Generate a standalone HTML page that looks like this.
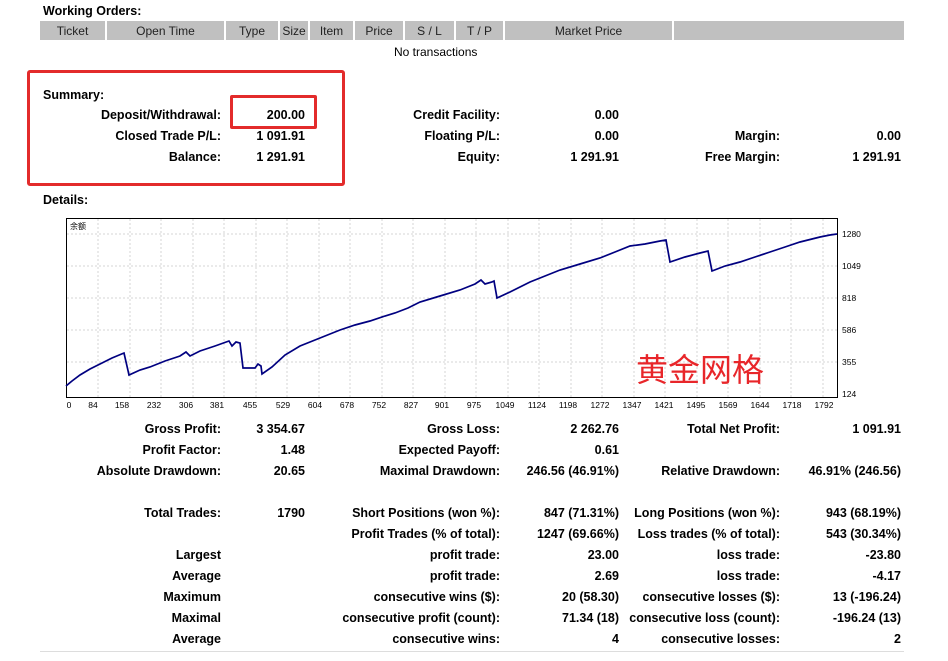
<!DOCTYPE html><html><head><meta charset="utf-8"><style>
body{margin:0;width:948px;height:661px;background:#fff;position:relative;overflow:hidden;font-family:"Liberation Sans",Tahoma,sans-serif;font-size:12.5px;color:#000}
.a{position:absolute;line-height:16px;white-space:nowrap}
.b{font-weight:bold}
.r{text-align:right}
.h{position:absolute;top:21px;height:19px;background:#c0c0c0;line-height:20px;text-align:center;font-size:12px;color:#222}
</style></head><body>
<div class="a b" style="left:43px;top:3px">Working Orders:</div>
<div class="h" style="left:40px;width:65px">Ticket</div>
<div class="h" style="left:107px;width:117px">Open Time</div>
<div class="h" style="left:226px;width:52px">Type</div>
<div class="h" style="left:280px;width:28px">Size</div>
<div class="h" style="left:310px;width:43px">Item</div>
<div class="h" style="left:355px;width:48px">Price</div>
<div class="h" style="left:405px;width:49px">S / L</div>
<div class="h" style="left:456px;width:47px">T / P</div>
<div class="h" style="left:505px;width:167px">Market Price</div>
<div class="h" style="left:674px;width:230px"></div>
<div class="a" style="left:394px;top:44px;font-size:12px">No transactions</div>

<div style="position:absolute;left:27px;top:70px;width:312px;height:110px;border:3px solid #e32b2b;border-radius:3px"></div>
<div style="position:absolute;left:230px;top:95px;width:81px;height:28px;border:3px solid #e32b2b;border-radius:2px"></div>

<div class="a b" style="left:43px;top:87px">Summary:</div>
<div class="a b r" style="right:727px;top:107px">Deposit/Withdrawal:</div>
<div class="a b r" style="right:643px;top:107px">200.00</div>
<div class="a b r" style="right:727px;top:128px">Closed Trade P/L:</div>
<div class="a b r" style="right:643px;top:128px">1 091.91</div>
<div class="a b r" style="right:727px;top:149px">Balance:</div>
<div class="a b r" style="right:643px;top:149px">1 291.91</div>
<div class="a b r" style="right:448px;top:107px">Credit Facility:</div>
<div class="a b r" style="right:329px;top:107px">0.00</div>
<div class="a b r" style="right:448px;top:128px">Floating P/L:</div>
<div class="a b r" style="right:329px;top:128px">0.00</div>
<div class="a b r" style="right:448px;top:149px">Equity:</div>
<div class="a b r" style="right:329px;top:149px">1 291.91</div>
<div class="a b r" style="right:168px;top:128px">Margin:</div>
<div class="a b r" style="right:47px;top:128px">0.00</div>
<div class="a b r" style="right:168px;top:149px">Free Margin:</div>
<div class="a b r" style="right:47px;top:149px">1 291.91</div>
<div class="a b" style="left:43px;top:192px">Details:</div>

<svg style="position:absolute;left:0;top:0" width="948" height="420" font-family="Liberation Sans,sans-serif" font-size="9">
<rect x="66.5" y="218.5" width="771" height="179" fill="#fff" stroke="#000"/>
<g stroke="#d4d4d4" stroke-dasharray="2,2">
<line x1="67" x2="837" y1="234" y2="234"/><line x1="67" x2="837" y1="266" y2="266"/><line x1="67" x2="837" y1="298" y2="298"/><line x1="67" x2="837" y1="330" y2="330"/><line x1="67" x2="837" y1="362" y2="362"/>
<line x1="98" x2="98" y1="219" y2="397"/><line x1="130" x2="130" y1="219" y2="397"/><line x1="161" x2="161" y1="219" y2="397"/><line x1="193" x2="193" y1="219" y2="397"/><line x1="224" x2="224" y1="219" y2="397"/><line x1="256" x2="256" y1="219" y2="397"/><line x1="287" x2="287" y1="219" y2="397"/><line x1="319" x2="319" y1="219" y2="397"/><line x1="350" x2="350" y1="219" y2="397"/><line x1="382" x2="382" y1="219" y2="397"/><line x1="413" x2="413" y1="219" y2="397"/><line x1="445" x2="445" y1="219" y2="397"/><line x1="476" x2="476" y1="219" y2="397"/><line x1="508" x2="508" y1="219" y2="397"/><line x1="539" x2="539" y1="219" y2="397"/><line x1="571" x2="571" y1="219" y2="397"/><line x1="602" x2="602" y1="219" y2="397"/><line x1="634" x2="634" y1="219" y2="397"/><line x1="665" x2="665" y1="219" y2="397"/><line x1="697" x2="697" y1="219" y2="397"/><line x1="728" x2="728" y1="219" y2="397"/><line x1="760" x2="760" y1="219" y2="397"/><line x1="791" x2="791" y1="219" y2="397"/><line x1="823" x2="823" y1="219" y2="397"/>
</g>
<text x="70" y="229" font-family="Noto Sans CJK SC,sans-serif" font-size="8">余额</text>
<polyline fill="none" stroke="#000080" stroke-width="1.7" points="66,386 72,381 80,375 90,369 100,364 112,358 124,353 129,375 140,370 150,367 165,361 180,356 186,352 190,356 200,351 215,346 229,341 232,346 236,342 240,343 243,368 255,368 258,364 261,366 262,374 272,367 285,355 300,346 320,338 340,330 355,325 370,321 385,316 395,313 408,308 420,302 440,296 460,290 475,284 481,280 485,284 492,282 494,281 497,298 510,292 520,287 530,282 545,276 560,270 580,264 600,258 615,252 630,246 645,244 660,241 666,240 670,262 685,257 700,253 708,251 712,271 725,266 740,262 755,257 770,252 785,247 800,242 812,239 820,237 830,235 837,234"/>
<g font-size="8.5">
<text x="842" y="237">1280</text><text x="842" y="269">1049</text><text x="842" y="301">818</text><text x="842" y="333">586</text><text x="842" y="365">355</text><text x="842" y="397">124</text>
</g>
<g font-size="8.5" text-anchor="middle">
<text x="69" y="408">0</text><text x="93" y="408">84</text><text x="122" y="408">158</text><text x="154" y="408">232</text><text x="186" y="408">306</text><text x="217" y="408">381</text><text x="250" y="408">455</text><text x="283" y="408">529</text><text x="315" y="408">604</text><text x="347" y="408">678</text><text x="379" y="408">752</text><text x="411" y="408">827</text><text x="442" y="408">901</text><text x="474" y="408">975</text><text x="505" y="408">1049</text><text x="537" y="408">1124</text><text x="568" y="408">1198</text><text x="600" y="408">1272</text><text x="632" y="408">1347</text><text x="664" y="408">1421</text><text x="696" y="408">1495</text><text x="728" y="408">1569</text><text x="760" y="408">1644</text><text x="792" y="408">1718</text><text x="824" y="408">1792</text>
</g>
<text x="636" y="381" font-family="Noto Sans CJK SC,sans-serif" font-size="32" fill="#e8262a">黄金网格</text>
</svg>

<div class="a b r" style="right:727px;top:421px">Gross Profit:</div><div class="a b r" style="right:643px;top:421px">3 354.67</div>
<div class="a b r" style="right:448px;top:421px">Gross Loss:</div><div class="a b r" style="right:329px;top:421px">2 262.76</div>
<div class="a b r" style="right:168px;top:421px">Total Net Profit:</div><div class="a b r" style="right:47px;top:421px">1 091.91</div>
<div class="a b r" style="right:727px;top:442px">Profit Factor:</div><div class="a b r" style="right:643px;top:442px">1.48</div>
<div class="a b r" style="right:448px;top:442px">Expected Payoff:</div><div class="a b r" style="right:329px;top:442px">0.61</div>
<div class="a b r" style="right:727px;top:463px">Absolute Drawdown:</div><div class="a b r" style="right:643px;top:463px">20.65</div>
<div class="a b r" style="right:448px;top:463px">Maximal Drawdown:</div><div class="a b r" style="right:329px;top:463px">246.56 (46.91%)</div>
<div class="a b r" style="right:168px;top:463px">Relative Drawdown:</div><div class="a b r" style="right:47px;top:463px">46.91% (246.56)</div>

<div class="a b r" style="right:727px;top:505px">Total Trades:</div><div class="a b r" style="right:643px;top:505px">1790</div>
<div class="a b r" style="right:448px;top:505px">Short Positions (won %):</div><div class="a b r" style="right:329px;top:505px">847 (71.31%)</div>
<div class="a b r" style="right:168px;top:505px">Long Positions (won %):</div><div class="a b r" style="right:47px;top:505px">943 (68.19%)</div>
<div class="a b r" style="right:448px;top:526px">Profit Trades (% of total):</div><div class="a b r" style="right:329px;top:526px">1247 (69.66%)</div>
<div class="a b r" style="right:168px;top:526px">Loss trades (% of total):</div><div class="a b r" style="right:47px;top:526px">543 (30.34%)</div>
<div class="a b r" style="right:727px;top:547px">Largest</div>
<div class="a b r" style="right:448px;top:547px">profit trade:</div><div class="a b r" style="right:329px;top:547px">23.00</div>
<div class="a b r" style="right:168px;top:547px">loss trade:</div><div class="a b r" style="right:47px;top:547px">-23.80</div>
<div class="a b r" style="right:727px;top:568px">Average</div>
<div class="a b r" style="right:448px;top:568px">profit trade:</div><div class="a b r" style="right:329px;top:568px">2.69</div>
<div class="a b r" style="right:168px;top:568px">loss trade:</div><div class="a b r" style="right:47px;top:568px">-4.17</div>
<div class="a b r" style="right:727px;top:589px">Maximum</div>
<div class="a b r" style="right:448px;top:589px">consecutive wins ($):</div><div class="a b r" style="right:329px;top:589px">20 (58.30)</div>
<div class="a b r" style="right:168px;top:589px">consecutive losses ($):</div><div class="a b r" style="right:47px;top:589px">13 (-196.24)</div>
<div class="a b r" style="right:727px;top:610px">Maximal</div>
<div class="a b r" style="right:448px;top:610px">consecutive profit (count):</div><div class="a b r" style="right:329px;top:610px">71.34 (18)</div>
<div class="a b r" style="right:168px;top:610px">consecutive loss (count):</div><div class="a b r" style="right:47px;top:610px">-196.24 (13)</div>
<div class="a b r" style="right:727px;top:631px">Average</div>
<div class="a b r" style="right:448px;top:631px">consecutive wins:</div><div class="a b r" style="right:329px;top:631px">4</div>
<div class="a b r" style="right:168px;top:631px">consecutive losses:</div><div class="a b r" style="right:47px;top:631px">2</div>
<div style="position:absolute;left:40px;top:651px;width:864px;height:1px;background:#ddd"></div>
</body></html>
